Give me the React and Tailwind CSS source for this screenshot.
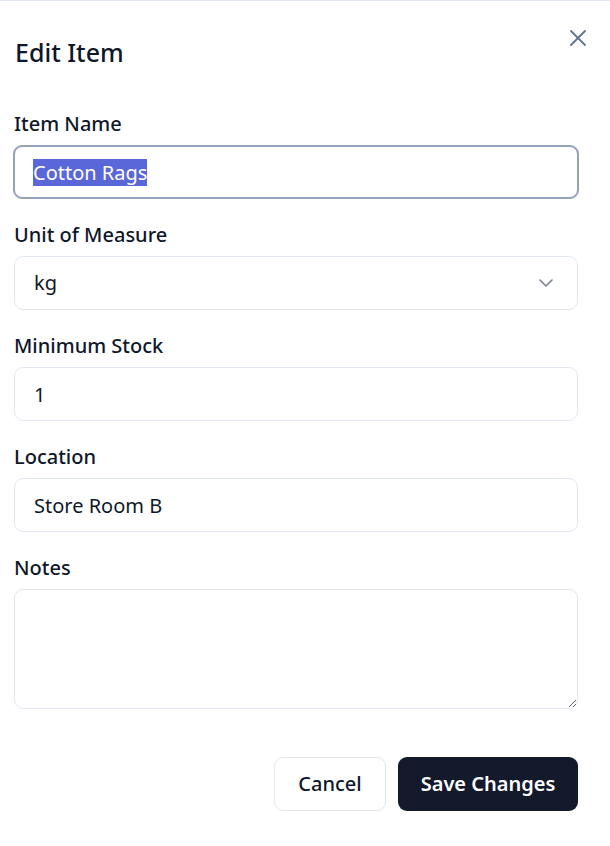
import React from 'react';

function Label({ children }) {
  return <label className="block text-[20px] leading-[28px] font-medium text-[#0f172a]">{children}</label>;
}

export default function App() {
  return (
    <div className="min-h-[846px] bg-white border-t border-[#e2e8f0] pl-[14px] pr-[32px] text-[#0f172a]" style={{ fontFamily: '"Noto Sans", "Open Sans", sans-serif' }}>
      <div className="relative pt-[34px]">
        <h2 className="text-[25px] leading-[34px] font-medium pl-px">Edit Item</h2>
        <button className="absolute right-[-14px] top-[23px] text-[#64748b]">
          <svg width="28" height="28" viewBox="0 0 24 24" fill="none" stroke="currentColor" strokeWidth="1.6" strokeLinecap="round">
            <path d="M18 6 6 18" />
            <path d="m6 6 12 12" />
          </svg>
        </button>
      </div>

      <div className="mt-[41px] flex flex-col gap-[22px]">
        <div className="flex flex-col gap-[7px]">
          <Label>Item Name</Label>
          <div className="h-[54px] -mx-px border-2 border-[#94a3b8] rounded-[9px] flex items-center pl-[18px]">
            <span className="bg-[#5a67d8] text-white text-[20px] leading-[27px]">Cotton Rags</span>
          </div>
        </div>

        <div className="flex flex-col gap-[7px]">
          <Label>Unit of Measure</Label>
          <div className="h-[54px] border border-[#e2e8f0] rounded-[9px] flex items-center justify-between pl-[19px] pr-[19px]">
            <span className="text-[20px]">kg</span>
            <svg width="24" height="24" viewBox="0 0 24 24" fill="none" stroke="#7b8190" strokeWidth="1.6" strokeLinecap="round" strokeLinejoin="round">
              <path d="m6 9 6 6 6-6" />
            </svg>
          </div>
        </div>

        <div className="flex flex-col gap-[7px]">
          <Label>Minimum Stock</Label>
          <input defaultValue="1" className="h-[54px] border border-[#e2e8f0] rounded-[9px] pl-[19px] text-[20px] outline-none" />
        </div>

        <div className="flex flex-col gap-[7px]">
          <Label>Location</Label>
          <input defaultValue="Store Room B" className="h-[54px] border border-[#e2e8f0] rounded-[9px] pl-[19px] text-[20px] outline-none" />
        </div>

        <div className="flex flex-col gap-[7px]">
          <Label>Notes</Label>
          <textarea className="h-[120px] border border-[#e2e8f0] rounded-[9px] px-[19px] py-[12px] text-[20px] outline-none resize-y" />
        </div>
      </div>

      <div className="mt-[48px] flex justify-end gap-[12px]">
        <button className="h-[54px] w-[112px] border border-[#e2e8f0] rounded-[9px] bg-white text-[20px] font-medium text-[#0f172a]">Cancel</button>
        <button className="h-[54px] w-[180px] rounded-[9px] bg-[#131a2c] text-[20px] font-semibold text-white">Save Changes</button>
      </div>
    </div>
  );
}
